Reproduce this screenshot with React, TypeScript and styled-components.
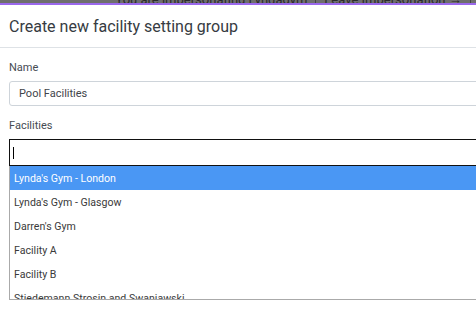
import styled, { createGlobalStyle } from "styled-components";

const GlobalStyle = createGlobalStyle`
  html, body {
    margin: 0;
    padding: 0;
    background: #ffffff;
    overflow: hidden;
  }
  body {
    font-family: Roboto, "Liberation Sans", Arial, sans-serif;
  }
`;

const Banner = styled.div`
  height: 3px;
  background: #6e6e6e;
  border-bottom: 2px solid #9a68ec;
  overflow: hidden;
  display: flex;
  justify-content: center;
  align-items: flex-end;
  padding-left: 110px;
`;
const BannerText = styled.span`
  font-size: 13px;
  line-height: 14px;
  margin-bottom: -4px;
  color: #2a2a2a;
  white-space: nowrap;
  & b {
    font-weight: 400;
    border-left: 1px solid #444;
    margin-left: 8px;
    padding-left: 8px;
    border-right: 1px solid #444;
    padding-right: 8px;
  }
`;

const Modal = styled.div`
  width: 560px;
  background: #ffffff;
`;
const Header = styled.div`
  height: 42px;
  padding: 0 9px;
  display: flex;
  align-items: center;
  border-bottom: 1px solid #dee2e6;
`;
const Title = styled.h5`
  margin: 0;
  font-size: 16px;
  font-weight: 400;
  color: #363b42;
`;
const Body = styled.div`
  padding: 13px 9px 0;
`;
const Field = styled.div`
  margin-bottom: 13px;
`;
const Label = styled.div`
  font-size: 11px;
  line-height: 14px;
  color: #454b52;
  margin-bottom: 6px;
`;
const TextInput = styled.div`
  height: 23px;
  border: 1px solid #ced4da;
  border-radius: 3px;
  padding: 0 9px;
  display: flex;
  align-items: center;
  font-size: 11px;
  color: #3f444a;
`;
const Search = styled.div`
  height: 25px;
  border: 1px solid #111;
  display: flex;
  align-items: center;
  padding-left: 3px;
`;
const Caret = styled.span`
  width: 1px;
  height: 12px;
  background: #000;
`;
const Results = styled.ul`
  list-style: none;
  margin: 0;
  padding: 0;
  height: 133px;
  overflow: hidden;
  border-left: 1px solid #aaaaaa;
  border-bottom: 1px solid #aaaaaa;
`;
const Option = styled.li<{ $active?: boolean }>`
  height: 24px;
  display: flex;
  align-items: center;
  padding-left: 4px;
  font-size: 10.6px;
  color: ${(p) => (p.$active ? "#ffffff" : "#3a3a3a")};
  background: ${(p) => (p.$active ? "#4a97f4" : "#ffffff")};
  white-space: nowrap;
`;

const options = [
  "Lynda's Gym - London",
  "Lynda's Gym - Glasgow",
  "Darren's Gym",
  "Facility A",
  "Facility B",
  "Stiedemann Strosin and Swaniawski",
];

export default function App() {
  return (
    <>
      <GlobalStyle />
      <Banner>
        <BannerText>
          You are impersonating Lyndagym<b>Leave Impersonation →</b>
        </BannerText>
      </Banner>
      <Modal>
        <Header>
          <Title>Create new facility setting group</Title>
        </Header>
        <Body>
          <Field>
            <Label>Name</Label>
            <TextInput>Pool Facilities</TextInput>
          </Field>
          <div>
            <Label>Facilities</Label>
            <Search>
              <Caret />
            </Search>
            <Results>
              {options.map((o, i) => (
                <Option key={o} $active={i === 0}>
                  {o}
                </Option>
              ))}
            </Results>
          </div>
        </Body>
      </Modal>
    </>
  );
}
